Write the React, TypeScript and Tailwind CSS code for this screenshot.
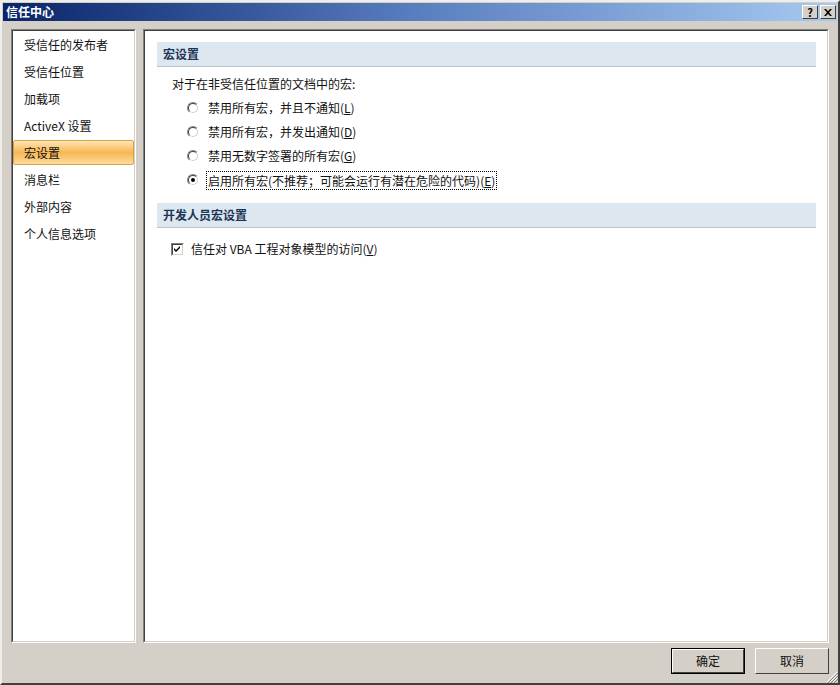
import React from 'react';

const font = { fontFamily: '"Noto Sans CJK SC", "Noto Sans", sans-serif' };

const navItems = [
  '受信任的发布者',
  '受信任位置',
  '加载项',
  'ActiveX 设置',
  '宏设置',
  '消息栏',
  '外部内容',
  '个人信息选项',
];

function Radio({ checked }: { checked?: boolean }) {
  return (
    <span className="inline-flex w-[12px] h-[12px] rounded-full border border-t-[#808080] border-l-[#808080] border-r-white border-b-white">
      <span className="flex-1 flex items-center justify-center rounded-full bg-white border border-t-[#404040] border-l-[#404040] border-r-[#d4d0c8] border-b-[#d4d0c8]">
        {checked && <span className="w-[4px] h-[4px] rounded-full bg-black" />}
      </span>
    </span>
  );
}

function Checkbox() {
  return (
    <span className="inline-flex w-[13px] h-[13px] border border-t-[#808080] border-l-[#808080] border-r-white border-b-white">
      <span className="flex-1 flex items-center justify-center bg-white border border-t-[#404040] border-l-[#404040] border-r-[#d4d0c8] border-b-[#d4d0c8]">
        <svg width="7" height="7" viewBox="0 0 7 7">
          <path d="M0 2 L2 4 L6 0 L6 2 L2 6 L0 4 Z" fill="#000" />
        </svg>
      </span>
    </span>
  );
}

function Label({ text, hot }: { text: string; hot: string }) {
  return (
    <>
      {text}(<span className="underline">{hot}</span>)
    </>
  );
}

function SectionHeader({ children }: { children: React.ReactNode }) {
  return (
    <div className="h-[25px] flex items-center pl-[6px] bg-[#dde7ef] border-b border-[#b9c4cc] font-bold text-[#1c3557]">
      {children}
    </div>
  );
}

function Button({ children, isDefault }: { children: React.ReactNode; isDefault?: boolean }) {
  return (
    <div className={`w-[74px] h-[26px] ${isDefault ? 'border border-black' : ''}`}>
      <div className="w-full h-full flex items-center justify-center bg-[#d4d0c8] border border-t-white border-l-white border-r-[#404040] border-b-[#404040]">
        {children}
      </div>
    </div>
  );
}

export default function App() {
  return (
    <div
      className="relative w-[840px] h-[685px] bg-[#d4d0c8] text-[12px] text-[#111] border-2 border-t-[#f0eee8] border-l-[#f0eee8] border-r-[#404040] border-b-[#404040] p-[1px] flex flex-col"
      style={font}
    >
      {/* Title bar */}
      <div className="h-[18px] flex items-center justify-between pl-[3px] pr-[1px] bg-gradient-to-r from-[#0a246a] via-[#5a7fc0] to-[#a6caf0]">
        <span className="text-white font-bold text-[12px] leading-none">信任中心</span>
        <div className="flex gap-[2px]">
          <div className="w-[16px] h-[14px] flex items-center justify-center bg-[#d4d0c8] border border-t-white border-l-white border-r-[#404040] border-b-[#404040] text-[11px] font-bold leading-none text-black">
            ?
          </div>
          <div className="w-[16px] h-[14px] flex items-center justify-center bg-[#d4d0c8] border border-t-white border-l-white border-r-[#404040] border-b-[#404040]">
            <svg width="8" height="7" viewBox="0 0 8 7">
              <path d="M0 0 L2 0 L4 2.2 L6 0 L8 0 L5 3.5 L8 7 L6 7 L4 4.8 L2 7 L0 7 L3 3.5 Z" fill="#000" />
            </svg>
          </div>
        </div>
      </div>

      {/* Panels */}
      <div className="mt-[8px] px-[8px] flex gap-[7px] h-[614px]">
        {/* Left nav */}
        <div className="w-[125px] border border-t-[#808080] border-l-[#808080] border-r-white border-b-white">
          <div className="h-full bg-white border border-t-[#404040] border-l-[#404040] border-r-[#d4d0c8] border-b-[#d4d0c8]">
            {navItems.map((item, i) => (
              <div key={item} className="h-[27px] py-[1px]">
                {i === 4 ? (
                  <div className="h-[25px] flex items-center pl-[10px] rounded-[2px] border border-[#d9a14c] bg-gradient-to-b from-[#fde6b4] via-[#f8b650] to-[#fcdc9a]">
                    {item}
                  </div>
                ) : (
                  <div className="h-[25px] flex items-center pl-[11px]">{item}</div>
                )}
              </div>
            ))}
          </div>
        </div>

        {/* Right content */}
        <div className="flex-1 border border-t-[#808080] border-l-[#808080] border-r-white border-b-white">
          <div className="h-full bg-white border border-t-[#404040] border-l-[#404040] border-r-[#d4d0c8] border-b-[#d4d0c8] pt-[11px] pl-[12px] pr-[11px]">
            <SectionHeader>宏设置</SectionHeader>
            <div className="mt-[5px] h-[24px] flex items-center pl-[15px]">对于在非受信任位置的文档中的宏:</div>
            <div className="pl-[30px]">
              <div className="h-[24px] flex items-center gap-[9px]">
                <Radio />
                <span><Label text="禁用所有宏，并且不通知" hot="L" /></span>
              </div>
              <div className="h-[24px] flex items-center gap-[9px]">
                <Radio />
                <span><Label text="禁用所有宏，并发出通知" hot="D" /></span>
              </div>
              <div className="h-[24px] flex items-center gap-[9px]">
                <Radio />
                <span><Label text="禁用无数字签署的所有宏" hot="G" /></span>
              </div>
              <div className="h-[24px] flex items-center gap-[7px]">
                <Radio checked />
                <span className="border border-dotted border-black px-[1px] leading-[17px]">
                  <Label text="启用所有宏(不推荐；可能会运行有潜在危险的代码)" hot="E" />
                </span>
              </div>
            </div>
            <div className="mt-[11px]">
              <SectionHeader>开发人员宏设置</SectionHeader>
            </div>
            <div className="mt-[9px] h-[24px] flex items-center gap-[7px] pl-[14px]">
              <Checkbox />
              <span><Label text="信任对 VBA 工程对象模型的访问" hot="V" /></span>
            </div>
          </div>
        </div>
      </div>

      {/* Footer buttons */}
      <div className="flex-1 flex justify-end items-start gap-[10px] pt-[5px] pr-[8px]">
        <Button isDefault>确定</Button>
        <Button>取消</Button>
      </div>

      {/* Resize grip */}
      <svg className="absolute right-0 bottom-0" width="12" height="12" viewBox="0 0 12 12">
        <path d="M11 1 L1 11 M11 4 L4 11 M11 7 L7 11" stroke="#ffffff" strokeWidth="1" />
        <path d="M12 2 L2 12 M12 5 L5 12 M12 8 L8 12" stroke="#808080" strokeWidth="1" />
      </svg>
    </div>
  );
}
